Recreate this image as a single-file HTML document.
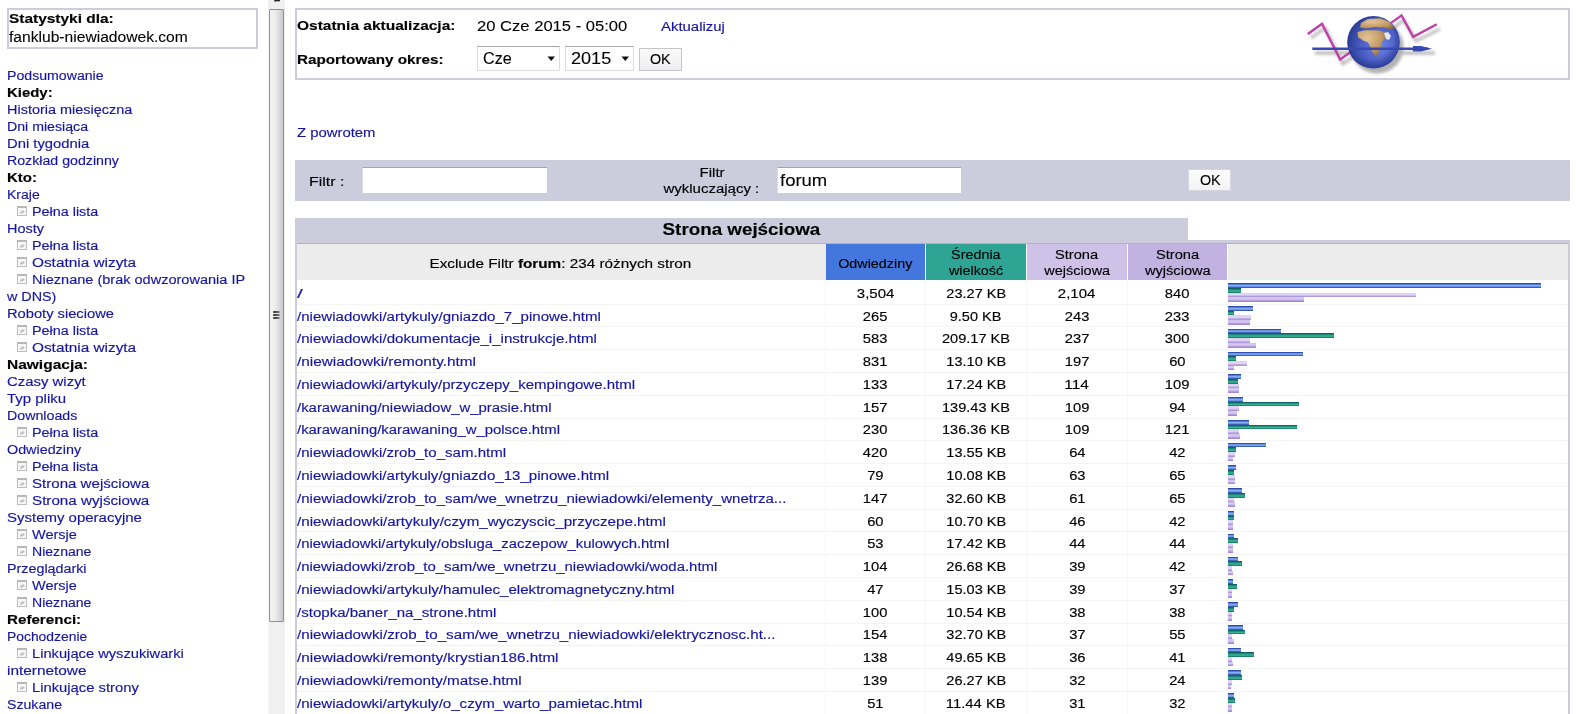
<!DOCTYPE html>
<html><head><meta charset="utf-8"><title>AWStats</title>
<style>
html,body{margin:0;padding:0;background:#fff;width:1576px;height:714px;overflow:hidden;position:relative;font-family:"Liberation Sans",sans-serif;}
.t{position:absolute;white-space:pre;font-family:"Liberation Sans",sans-serif;-webkit-text-stroke:0.15px currentColor;}
.t2{-webkit-text-stroke:0.1px currentColor;}
.bx{position:absolute;box-sizing:border-box;}
b{font-weight:bold;}
</style></head><body>

<div class="bx" style="left:7px;top:8px;width:251px;height:41px;border:2px solid #CCCCDD;background:#fff"></div>
<div class="bx" style="left:268px;top:0px;width:17px;height:714px;background:#F0F0F0;border-left:1px solid #F8F8F8"></div>
<div class="bx" style="left:269px;top:9px;width:15px;height:613px;border:1px solid #8F8F8F;border-radius:1px;background:linear-gradient(90deg,#F4F4F4 0%,#ECECEC 40%,#D6D6DA 80%,#C8C8CC 100%)"></div>
<div class="bx" style="left:273px;top:311px;width:7px;height:2px;background:linear-gradient(90deg,#333 0%,#555 60%,#999 100%);border-radius:1px"></div>
<div class="bx" style="left:273px;top:314px;width:7px;height:2px;background:linear-gradient(90deg,#333 0%,#555 60%,#999 100%);border-radius:1px"></div>
<div class="bx" style="left:273px;top:317px;width:7px;height:2px;background:linear-gradient(90deg,#333 0%,#555 60%,#999 100%);border-radius:1px"></div>
<svg style="position:absolute;left:268px;top:0" width="17" height="9"><rect x="0" y="0" width="17" height="9" fill="#F0F0F0"/><path d="M6.5 0 L12 0 L12 1.3 L6 1.5 Z" fill="#222"/></svg>
<div class="bx" style="left:295px;top:8px;width:1275px;height:72px;border:2px solid #CCCCDD;background:#fff"></div>
<div class="bx" style="left:477px;top:46px;width:83px;height:25px;border:1px solid #DCDCDC;border-top-color:#A9A9A9;background:#fff"></div>
<div class="bx" style="left:565px;top:46px;width:69px;height:25px;border:1px solid #DCDCDC;border-top-color:#A9A9A9;background:#fff"></div>
<svg style="position:absolute;left:547px;top:56px" width="9" height="6"><path d="M0.5 0.5 L8 0.5 L4.25 5 Z" fill="#111"/></svg>
<svg style="position:absolute;left:621px;top:56px" width="9" height="6"><path d="M0.5 0.5 L8 0.5 L4.25 5 Z" fill="#111"/></svg>
<div class="bx" style="left:639px;top:48px;width:43px;height:23px;border:1px solid #C6C6C6;background:linear-gradient(#FBFBFB,#EEEEEE)"></div>
<svg style="position:absolute;left:1296px;top:8px" width="152" height="72" viewBox="1296 8 152 72">
<defs>
<filter id="sh" x="-20%" y="-20%" width="140%" height="160%"><feGaussianBlur stdDeviation="1.6"/></filter>
<radialGradient id="gl" cx="0.62" cy="0.55" r="0.65"><stop offset="0" stop-color="#6c84e4"/><stop offset="0.55" stop-color="#4a5ec4"/><stop offset="1" stop-color="#263890"/></radialGradient>
<radialGradient id="edge" cx="0.45" cy="0.4" r="0.6"><stop offset="0.7" stop-color="#1c2c80" stop-opacity="0"/><stop offset="1" stop-color="#1c2c80" stop-opacity="0.55"/></radialGradient>
<radialGradient id="la" cx="0.35" cy="0.3" r="0.8"><stop offset="0" stop-color="#e2c498"/><stop offset="0.6" stop-color="#c49a64"/><stop offset="1" stop-color="#8a6a48"/></radialGradient>
</defs>
<g filter="url(#sh)" opacity="0.45">
<polyline points="1311,38 1325,28 1343,64 1404,20 1416,41 1440,29" fill="none" stroke="#666" stroke-width="3"/>
<circle cx="1377" cy="47" r="26.5" fill="#555"/>
<line x1="1315" y1="53" x2="1435" y2="53" stroke="#555" stroke-width="3"/>
</g>
<polyline points="1307.8,34 1322,23.7 1340.2,59.5 1401.5,15.4 1413.2,36.9 1436.8,24.2" fill="none" stroke="#C040A8" stroke-width="2.4" stroke-linejoin="miter"/>
<circle cx="1373.5" cy="42.3" r="26.3" fill="url(#gl)"/>
<clipPath id="gc"><circle cx="1373.5" cy="42.3" r="26.3"/></clipPath>
<g clip-path="url(#gc)">
<path d="M1361,23 L1368,19 L1380,18.3 L1390,22 L1396,28 L1390,29.5 L1384,27.5 L1375,27 L1366,28.5 L1360,27.5 Z" fill="url(#la)"/>
<path d="M1357.5,32 L1365,30.3 L1376,30.3 L1382,31 L1386,33.5 L1385,38 L1382,42 L1381,46 L1379,52 L1376,56.5 L1373,53 L1370,46 L1368,42.5 L1363,40.5 L1358,37 Z" fill="url(#la)"/>
<path d="M1384,33 L1388,32 L1391,36 L1389,40 L1386,39 Z" fill="#e4e6f0"/>
<circle cx="1373.5" cy="42.3" r="26.3" fill="url(#edge)"/>
</g>
<line x1="1312.3" y1="48.7" x2="1428" y2="48.7" stroke="#3848B0" stroke-width="2.6"/>
<path d="M1413,46 L1421,46 L1432,48.7 L1421,51.4 L1413,51.4 Z" fill="#3848B0"/>
</svg>
<div class="bx" style="left:295px;top:160px;width:1275px;height:41px;background:#CCCCDD"></div>
<div class="bx" style="left:362px;top:167px;width:185px;height:26px;background:#fff;border-top:1px solid #A4A4AC;border-left:1px solid #DADAE2"></div>
<div class="bx" style="left:777px;top:167px;width:184px;height:26px;background:#fff;border-top:1px solid #A4A4AC;border-left:1px solid #DADAE2"></div>
<div class="bx" style="left:1188px;top:169px;width:43px;height:22px;border:1px solid #D6D6DE;background:linear-gradient(#FDFDFD,#F3F3F3)"></div>
<div class="bx" style="left:295px;top:218px;width:893px;height:24px;background:#CCCCDD"></div>
<div class="bx" style="left:295px;top:240px;width:1275px;height:3px;background:#CCCCDD"></div>
<div class="bx" style="left:295px;top:243px;width:1275px;height:1px;background:#B0B0B8"></div>
<div class="bx" style="left:295px;top:242px;width:2px;height:472px;background:#CCCCDD"></div>
<div class="bx" style="left:1568px;top:242px;width:2px;height:472px;background:#CCCCDD"></div>
<div class="bx" style="left:297px;top:244px;width:529px;height:36px;background:#ECECEC"></div>
<div class="bx" style="left:826px;top:244px;width:99px;height:36px;background:#4477DD"></div>
<div class="bx" style="left:926px;top:244px;width:100px;height:36px;background:#2EA495"></div>
<div class="bx" style="left:1027px;top:244px;width:100px;height:36px;background:#CEC2E8"></div>
<div class="bx" style="left:1128px;top:244px;width:99px;height:36px;background:#C1B2E2"></div>
<div class="bx" style="left:1228px;top:244px;width:340px;height:36px;background:#ECECEC"></div>
<div class="bx" style="left:825px;top:280px;width:1px;height:434px;background:#F6F6F6"></div>
<div class="bx" style="left:925px;top:280px;width:1px;height:434px;background:#F6F6F6"></div>
<div class="bx" style="left:1026px;top:280px;width:1px;height:434px;background:#F6F6F6"></div>
<div class="bx" style="left:1127px;top:280px;width:1px;height:434px;background:#F6F6F6"></div>
<div class="bx" style="left:1227px;top:280px;width:1px;height:434px;background:#F6F6F6"></div>
<div class="bx" style="left:297px;top:304px;width:1271px;height:1px;background:#F4F4F4"></div>
<div class="bx" style="left:297px;top:326px;width:1271px;height:1px;background:#F4F4F4"></div>
<div class="bx" style="left:297px;top:349px;width:1271px;height:1px;background:#F4F4F4"></div>
<div class="bx" style="left:297px;top:372px;width:1271px;height:1px;background:#F4F4F4"></div>
<div class="bx" style="left:297px;top:395px;width:1271px;height:1px;background:#F4F4F4"></div>
<div class="bx" style="left:297px;top:418px;width:1271px;height:1px;background:#F4F4F4"></div>
<div class="bx" style="left:297px;top:440px;width:1271px;height:1px;background:#F4F4F4"></div>
<div class="bx" style="left:297px;top:463px;width:1271px;height:1px;background:#F4F4F4"></div>
<div class="bx" style="left:297px;top:486px;width:1271px;height:1px;background:#F4F4F4"></div>
<div class="bx" style="left:297px;top:509px;width:1271px;height:1px;background:#F4F4F4"></div>
<div class="bx" style="left:297px;top:531px;width:1271px;height:1px;background:#F4F4F4"></div>
<div class="bx" style="left:297px;top:554px;width:1271px;height:1px;background:#F4F4F4"></div>
<div class="bx" style="left:297px;top:577px;width:1271px;height:1px;background:#F4F4F4"></div>
<div class="bx" style="left:297px;top:600px;width:1271px;height:1px;background:#F4F4F4"></div>
<div class="bx" style="left:297px;top:623px;width:1271px;height:1px;background:#F4F4F4"></div>
<div class="bx" style="left:297px;top:645px;width:1271px;height:1px;background:#F4F4F4"></div>
<div class="bx" style="left:297px;top:668px;width:1271px;height:1px;background:#F4F4F4"></div>
<div class="bx" style="left:297px;top:691px;width:1271px;height:1px;background:#F4F4F4"></div>
<div class="bx" style="left:297px;top:714px;width:1271px;height:1px;background:#F4F4F4"></div>
<div class="bx" style="left:1228px;top:283px;width:313px;height:5px;background:linear-gradient(#1C3A8C 0%,#3a64c8 22%,#8CB0FA 45%,#6c94ec 70%,#23448F 100%)"></div>
<div class="bx" style="left:1228px;top:288px;width:13px;height:5px;background:linear-gradient(#0C4F5C 0%,#1c8478 30%,#3CB896 60%,#2a9a80 80%,#0E6A48 100%)"></div>
<div class="bx" style="left:1228px;top:293px;width:188px;height:4px;background:linear-gradient(#D8CCF2 0%,#E4DAFA 45%,#C2B0E6 70%,#A48CD0 100%)"></div>
<div class="bx" style="left:1228px;top:297px;width:76px;height:5px;background:linear-gradient(#CDBEEC 0%,#D8CAF4 40%,#B49EDC 70%,#9A80C8 100%)"></div>
<div class="bx" style="left:1228px;top:306px;width:25px;height:5px;background:linear-gradient(#1C3A8C 0%,#3a64c8 22%,#8CB0FA 45%,#6c94ec 70%,#23448F 100%)"></div>
<div class="bx" style="left:1228px;top:311px;width:6px;height:4px;background:linear-gradient(#0C4F5C 0%,#1c8478 30%,#3CB896 60%,#2a9a80 80%,#0E6A48 100%)"></div>
<div class="bx" style="left:1228px;top:315px;width:23px;height:5px;background:linear-gradient(#D8CCF2 0%,#E4DAFA 45%,#C2B0E6 70%,#A48CD0 100%)"></div>
<div class="bx" style="left:1228px;top:320px;width:22px;height:5px;background:linear-gradient(#CDBEEC 0%,#D8CAF4 40%,#B49EDC 70%,#9A80C8 100%)"></div>
<div class="bx" style="left:1228px;top:329px;width:53px;height:4px;background:linear-gradient(#1C3A8C 0%,#3a64c8 22%,#8CB0FA 45%,#6c94ec 70%,#23448F 100%)"></div>
<div class="bx" style="left:1228px;top:333px;width:106px;height:5px;background:linear-gradient(#0C4F5C 0%,#1c8478 30%,#3CB896 60%,#2a9a80 80%,#0E6A48 100%)"></div>
<div class="bx" style="left:1228px;top:338px;width:22px;height:5px;background:linear-gradient(#D8CCF2 0%,#E4DAFA 45%,#C2B0E6 70%,#A48CD0 100%)"></div>
<div class="bx" style="left:1228px;top:343px;width:28px;height:5px;background:linear-gradient(#CDBEEC 0%,#D8CAF4 40%,#B49EDC 70%,#9A80C8 100%)"></div>
<div class="bx" style="left:1228px;top:352px;width:75px;height:4px;background:linear-gradient(#1C3A8C 0%,#3a64c8 22%,#8CB0FA 45%,#6c94ec 70%,#23448F 100%)"></div>
<div class="bx" style="left:1228px;top:356px;width:8px;height:5px;background:linear-gradient(#0C4F5C 0%,#1c8478 30%,#3CB896 60%,#2a9a80 80%,#0E6A48 100%)"></div>
<div class="bx" style="left:1228px;top:361px;width:19px;height:5px;background:linear-gradient(#D8CCF2 0%,#E4DAFA 45%,#C2B0E6 70%,#A48CD0 100%)"></div>
<div class="bx" style="left:1228px;top:366px;width:6px;height:4px;background:linear-gradient(#CDBEEC 0%,#D8CAF4 40%,#B49EDC 70%,#9A80C8 100%)"></div>
<div class="bx" style="left:1228px;top:374px;width:13px;height:5px;background:linear-gradient(#1C3A8C 0%,#3a64c8 22%,#8CB0FA 45%,#6c94ec 70%,#23448F 100%)"></div>
<div class="bx" style="left:1228px;top:379px;width:10px;height:5px;background:linear-gradient(#0C4F5C 0%,#1c8478 30%,#3CB896 60%,#2a9a80 80%,#0E6A48 100%)"></div>
<div class="bx" style="left:1228px;top:384px;width:11px;height:4px;background:linear-gradient(#D8CCF2 0%,#E4DAFA 45%,#C2B0E6 70%,#A48CD0 100%)"></div>
<div class="bx" style="left:1228px;top:388px;width:11px;height:5px;background:linear-gradient(#CDBEEC 0%,#D8CAF4 40%,#B49EDC 70%,#9A80C8 100%)"></div>
<div class="bx" style="left:1228px;top:397px;width:15px;height:5px;background:linear-gradient(#1C3A8C 0%,#3a64c8 22%,#8CB0FA 45%,#6c94ec 70%,#23448F 100%)"></div>
<div class="bx" style="left:1228px;top:402px;width:71px;height:4px;background:linear-gradient(#0C4F5C 0%,#1c8478 30%,#3CB896 60%,#2a9a80 80%,#0E6A48 100%)"></div>
<div class="bx" style="left:1228px;top:406px;width:11px;height:5px;background:linear-gradient(#D8CCF2 0%,#E4DAFA 45%,#C2B0E6 70%,#A48CD0 100%)"></div>
<div class="bx" style="left:1228px;top:411px;width:9px;height:5px;background:linear-gradient(#CDBEEC 0%,#D8CAF4 40%,#B49EDC 70%,#9A80C8 100%)"></div>
<div class="bx" style="left:1228px;top:420px;width:21px;height:5px;background:linear-gradient(#1C3A8C 0%,#3a64c8 22%,#8CB0FA 45%,#6c94ec 70%,#23448F 100%)"></div>
<div class="bx" style="left:1228px;top:425px;width:69px;height:4px;background:linear-gradient(#0C4F5C 0%,#1c8478 30%,#3CB896 60%,#2a9a80 80%,#0E6A48 100%)"></div>
<div class="bx" style="left:1228px;top:429px;width:11px;height:5px;background:linear-gradient(#D8CCF2 0%,#E4DAFA 45%,#C2B0E6 70%,#A48CD0 100%)"></div>
<div class="bx" style="left:1228px;top:434px;width:12px;height:5px;background:linear-gradient(#CDBEEC 0%,#D8CAF4 40%,#B49EDC 70%,#9A80C8 100%)"></div>
<div class="bx" style="left:1228px;top:443px;width:38px;height:4px;background:linear-gradient(#1C3A8C 0%,#3a64c8 22%,#8CB0FA 45%,#6c94ec 70%,#23448F 100%)"></div>
<div class="bx" style="left:1228px;top:447px;width:8px;height:5px;background:linear-gradient(#0C4F5C 0%,#1c8478 30%,#3CB896 60%,#2a9a80 80%,#0E6A48 100%)"></div>
<div class="bx" style="left:1228px;top:452px;width:7px;height:5px;background:linear-gradient(#D8CCF2 0%,#E4DAFA 45%,#C2B0E6 70%,#A48CD0 100%)"></div>
<div class="bx" style="left:1228px;top:457px;width:5px;height:4px;background:linear-gradient(#CDBEEC 0%,#D8CAF4 40%,#B49EDC 70%,#9A80C8 100%)"></div>
<div class="bx" style="left:1228px;top:465px;width:8px;height:5px;background:linear-gradient(#1C3A8C 0%,#3a64c8 22%,#8CB0FA 45%,#6c94ec 70%,#23448F 100%)"></div>
<div class="bx" style="left:1228px;top:470px;width:6px;height:5px;background:linear-gradient(#0C4F5C 0%,#1c8478 30%,#3CB896 60%,#2a9a80 80%,#0E6A48 100%)"></div>
<div class="bx" style="left:1228px;top:475px;width:7px;height:5px;background:linear-gradient(#D8CCF2 0%,#E4DAFA 45%,#C2B0E6 70%,#A48CD0 100%)"></div>
<div class="bx" style="left:1228px;top:480px;width:7px;height:4px;background:linear-gradient(#CDBEEC 0%,#D8CAF4 40%,#B49EDC 70%,#9A80C8 100%)"></div>
<div class="bx" style="left:1228px;top:488px;width:14px;height:5px;background:linear-gradient(#1C3A8C 0%,#3a64c8 22%,#8CB0FA 45%,#6c94ec 70%,#23448F 100%)"></div>
<div class="bx" style="left:1228px;top:493px;width:17px;height:5px;background:linear-gradient(#0C4F5C 0%,#1c8478 30%,#3CB896 60%,#2a9a80 80%,#0E6A48 100%)"></div>
<div class="bx" style="left:1228px;top:498px;width:6px;height:4px;background:linear-gradient(#D8CCF2 0%,#E4DAFA 45%,#C2B0E6 70%,#A48CD0 100%)"></div>
<div class="bx" style="left:1228px;top:502px;width:7px;height:5px;background:linear-gradient(#CDBEEC 0%,#D8CAF4 40%,#B49EDC 70%,#9A80C8 100%)"></div>
<div class="bx" style="left:1228px;top:511px;width:6px;height:5px;background:linear-gradient(#1C3A8C 0%,#3a64c8 22%,#8CB0FA 45%,#6c94ec 70%,#23448F 100%)"></div>
<div class="bx" style="left:1228px;top:516px;width:6px;height:4px;background:linear-gradient(#0C4F5C 0%,#1c8478 30%,#3CB896 60%,#2a9a80 80%,#0E6A48 100%)"></div>
<div class="bx" style="left:1228px;top:520px;width:5px;height:5px;background:linear-gradient(#D8CCF2 0%,#E4DAFA 45%,#C2B0E6 70%,#A48CD0 100%)"></div>
<div class="bx" style="left:1228px;top:525px;width:5px;height:5px;background:linear-gradient(#CDBEEC 0%,#D8CAF4 40%,#B49EDC 70%,#9A80C8 100%)"></div>
<div class="bx" style="left:1228px;top:534px;width:6px;height:4px;background:linear-gradient(#1C3A8C 0%,#3a64c8 22%,#8CB0FA 45%,#6c94ec 70%,#23448F 100%)"></div>
<div class="bx" style="left:1228px;top:538px;width:10px;height:5px;background:linear-gradient(#0C4F5C 0%,#1c8478 30%,#3CB896 60%,#2a9a80 80%,#0E6A48 100%)"></div>
<div class="bx" style="left:1228px;top:543px;width:5px;height:5px;background:linear-gradient(#D8CCF2 0%,#E4DAFA 45%,#C2B0E6 70%,#A48CD0 100%)"></div>
<div class="bx" style="left:1228px;top:548px;width:5px;height:5px;background:linear-gradient(#CDBEEC 0%,#D8CAF4 40%,#B49EDC 70%,#9A80C8 100%)"></div>
<div class="bx" style="left:1228px;top:557px;width:10px;height:4px;background:linear-gradient(#1C3A8C 0%,#3a64c8 22%,#8CB0FA 45%,#6c94ec 70%,#23448F 100%)"></div>
<div class="bx" style="left:1228px;top:561px;width:14px;height:5px;background:linear-gradient(#0C4F5C 0%,#1c8478 30%,#3CB896 60%,#2a9a80 80%,#0E6A48 100%)"></div>
<div class="bx" style="left:1228px;top:566px;width:4px;height:5px;background:linear-gradient(#D8CCF2 0%,#E4DAFA 45%,#C2B0E6 70%,#A48CD0 100%)"></div>
<div class="bx" style="left:1228px;top:571px;width:5px;height:4px;background:linear-gradient(#CDBEEC 0%,#D8CAF4 40%,#B49EDC 70%,#9A80C8 100%)"></div>
<div class="bx" style="left:1228px;top:579px;width:5px;height:5px;background:linear-gradient(#1C3A8C 0%,#3a64c8 22%,#8CB0FA 45%,#6c94ec 70%,#23448F 100%)"></div>
<div class="bx" style="left:1228px;top:584px;width:9px;height:5px;background:linear-gradient(#0C4F5C 0%,#1c8478 30%,#3CB896 60%,#2a9a80 80%,#0E6A48 100%)"></div>
<div class="bx" style="left:1228px;top:589px;width:4px;height:4px;background:linear-gradient(#D8CCF2 0%,#E4DAFA 45%,#C2B0E6 70%,#A48CD0 100%)"></div>
<div class="bx" style="left:1228px;top:593px;width:4px;height:5px;background:linear-gradient(#CDBEEC 0%,#D8CAF4 40%,#B49EDC 70%,#9A80C8 100%)"></div>
<div class="bx" style="left:1228px;top:602px;width:10px;height:5px;background:linear-gradient(#1C3A8C 0%,#3a64c8 22%,#8CB0FA 45%,#6c94ec 70%,#23448F 100%)"></div>
<div class="bx" style="left:1228px;top:607px;width:6px;height:5px;background:linear-gradient(#0C4F5C 0%,#1c8478 30%,#3CB896 60%,#2a9a80 80%,#0E6A48 100%)"></div>
<div class="bx" style="left:1228px;top:612px;width:4px;height:4px;background:linear-gradient(#D8CCF2 0%,#E4DAFA 45%,#C2B0E6 70%,#A48CD0 100%)"></div>
<div class="bx" style="left:1228px;top:616px;width:4px;height:5px;background:linear-gradient(#CDBEEC 0%,#D8CAF4 40%,#B49EDC 70%,#9A80C8 100%)"></div>
<div class="bx" style="left:1228px;top:625px;width:15px;height:5px;background:linear-gradient(#1C3A8C 0%,#3a64c8 22%,#8CB0FA 45%,#6c94ec 70%,#23448F 100%)"></div>
<div class="bx" style="left:1228px;top:630px;width:17px;height:4px;background:linear-gradient(#0C4F5C 0%,#1c8478 30%,#3CB896 60%,#2a9a80 80%,#0E6A48 100%)"></div>
<div class="bx" style="left:1228px;top:634px;width:4px;height:5px;background:linear-gradient(#D8CCF2 0%,#E4DAFA 45%,#C2B0E6 70%,#A48CD0 100%)"></div>
<div class="bx" style="left:1228px;top:639px;width:6px;height:5px;background:linear-gradient(#CDBEEC 0%,#D8CAF4 40%,#B49EDC 70%,#9A80C8 100%)"></div>
<div class="bx" style="left:1228px;top:648px;width:13px;height:4px;background:linear-gradient(#1C3A8C 0%,#3a64c8 22%,#8CB0FA 45%,#6c94ec 70%,#23448F 100%)"></div>
<div class="bx" style="left:1228px;top:652px;width:26px;height:5px;background:linear-gradient(#0C4F5C 0%,#1c8478 30%,#3CB896 60%,#2a9a80 80%,#0E6A48 100%)"></div>
<div class="bx" style="left:1228px;top:657px;width:4px;height:5px;background:linear-gradient(#D8CCF2 0%,#E4DAFA 45%,#C2B0E6 70%,#A48CD0 100%)"></div>
<div class="bx" style="left:1228px;top:662px;width:5px;height:4px;background:linear-gradient(#CDBEEC 0%,#D8CAF4 40%,#B49EDC 70%,#9A80C8 100%)"></div>
<div class="bx" style="left:1228px;top:670px;width:13px;height:5px;background:linear-gradient(#1C3A8C 0%,#3a64c8 22%,#8CB0FA 45%,#6c94ec 70%,#23448F 100%)"></div>
<div class="bx" style="left:1228px;top:675px;width:14px;height:5px;background:linear-gradient(#0C4F5C 0%,#1c8478 30%,#3CB896 60%,#2a9a80 80%,#0E6A48 100%)"></div>
<div class="bx" style="left:1228px;top:680px;width:4px;height:5px;background:linear-gradient(#D8CCF2 0%,#E4DAFA 45%,#C2B0E6 70%,#A48CD0 100%)"></div>
<div class="bx" style="left:1228px;top:685px;width:3px;height:4px;background:linear-gradient(#CDBEEC 0%,#D8CAF4 40%,#B49EDC 70%,#9A80C8 100%)"></div>
<div class="bx" style="left:1228px;top:693px;width:6px;height:5px;background:linear-gradient(#1C3A8C 0%,#3a64c8 22%,#8CB0FA 45%,#6c94ec 70%,#23448F 100%)"></div>
<div class="bx" style="left:1228px;top:698px;width:7px;height:5px;background:linear-gradient(#0C4F5C 0%,#1c8478 30%,#3CB896 60%,#2a9a80 80%,#0E6A48 100%)"></div>
<div class="bx" style="left:1228px;top:703px;width:4px;height:4px;background:linear-gradient(#D8CCF2 0%,#E4DAFA 45%,#C2B0E6 70%,#A48CD0 100%)"></div>
<div class="bx" style="left:1228px;top:707px;width:4px;height:5px;background:linear-gradient(#CDBEEC 0%,#D8CAF4 40%,#B49EDC 70%,#9A80C8 100%)"></div>
<svg style="position:absolute;left:17px;top:206px" width="10" height="10"><rect x="0.5" y="0.5" width="9" height="9" fill="#F8F8F8" stroke="#BDBDBD"/><rect x="0" y="0" width="10" height="2" fill="#B4B9B4"/><ellipse cx="5.2" cy="6" rx="2.6" ry="1.5" transform="rotate(-25 5.2 6)" fill="#C4C4C4"/></svg>
<svg style="position:absolute;left:17px;top:240px" width="10" height="10"><rect x="0.5" y="0.5" width="9" height="9" fill="#F8F8F8" stroke="#BDBDBD"/><rect x="0" y="0" width="10" height="2" fill="#B4B9B4"/><ellipse cx="5.2" cy="6" rx="2.6" ry="1.5" transform="rotate(-25 5.2 6)" fill="#C4C4C4"/></svg>
<svg style="position:absolute;left:17px;top:257px" width="10" height="10"><rect x="0.5" y="0.5" width="9" height="9" fill="#F8F8F8" stroke="#BDBDBD"/><rect x="0" y="0" width="10" height="2" fill="#B4B9B4"/><ellipse cx="5.2" cy="6" rx="2.6" ry="1.5" transform="rotate(-25 5.2 6)" fill="#C4C4C4"/></svg>
<svg style="position:absolute;left:17px;top:274px" width="10" height="10"><rect x="0.5" y="0.5" width="9" height="9" fill="#F8F8F8" stroke="#BDBDBD"/><rect x="0" y="0" width="10" height="2" fill="#B4B9B4"/><ellipse cx="5.2" cy="6" rx="2.6" ry="1.5" transform="rotate(-25 5.2 6)" fill="#C4C4C4"/></svg>
<svg style="position:absolute;left:17px;top:325px" width="10" height="10"><rect x="0.5" y="0.5" width="9" height="9" fill="#F8F8F8" stroke="#BDBDBD"/><rect x="0" y="0" width="10" height="2" fill="#B4B9B4"/><ellipse cx="5.2" cy="6" rx="2.6" ry="1.5" transform="rotate(-25 5.2 6)" fill="#C4C4C4"/></svg>
<svg style="position:absolute;left:17px;top:342px" width="10" height="10"><rect x="0.5" y="0.5" width="9" height="9" fill="#F8F8F8" stroke="#BDBDBD"/><rect x="0" y="0" width="10" height="2" fill="#B4B9B4"/><ellipse cx="5.2" cy="6" rx="2.6" ry="1.5" transform="rotate(-25 5.2 6)" fill="#C4C4C4"/></svg>
<svg style="position:absolute;left:17px;top:427px" width="10" height="10"><rect x="0.5" y="0.5" width="9" height="9" fill="#F8F8F8" stroke="#BDBDBD"/><rect x="0" y="0" width="10" height="2" fill="#B4B9B4"/><ellipse cx="5.2" cy="6" rx="2.6" ry="1.5" transform="rotate(-25 5.2 6)" fill="#C4C4C4"/></svg>
<svg style="position:absolute;left:17px;top:461px" width="10" height="10"><rect x="0.5" y="0.5" width="9" height="9" fill="#F8F8F8" stroke="#BDBDBD"/><rect x="0" y="0" width="10" height="2" fill="#B4B9B4"/><ellipse cx="5.2" cy="6" rx="2.6" ry="1.5" transform="rotate(-25 5.2 6)" fill="#C4C4C4"/></svg>
<svg style="position:absolute;left:17px;top:478px" width="10" height="10"><rect x="0.5" y="0.5" width="9" height="9" fill="#F8F8F8" stroke="#BDBDBD"/><rect x="0" y="0" width="10" height="2" fill="#B4B9B4"/><ellipse cx="5.2" cy="6" rx="2.6" ry="1.5" transform="rotate(-25 5.2 6)" fill="#C4C4C4"/></svg>
<svg style="position:absolute;left:17px;top:495px" width="10" height="10"><rect x="0.5" y="0.5" width="9" height="9" fill="#F8F8F8" stroke="#BDBDBD"/><rect x="0" y="0" width="10" height="2" fill="#B4B9B4"/><ellipse cx="5.2" cy="6" rx="2.6" ry="1.5" transform="rotate(-25 5.2 6)" fill="#C4C4C4"/></svg>
<svg style="position:absolute;left:17px;top:529px" width="10" height="10"><rect x="0.5" y="0.5" width="9" height="9" fill="#F8F8F8" stroke="#BDBDBD"/><rect x="0" y="0" width="10" height="2" fill="#B4B9B4"/><ellipse cx="5.2" cy="6" rx="2.6" ry="1.5" transform="rotate(-25 5.2 6)" fill="#C4C4C4"/></svg>
<svg style="position:absolute;left:17px;top:546px" width="10" height="10"><rect x="0.5" y="0.5" width="9" height="9" fill="#F8F8F8" stroke="#BDBDBD"/><rect x="0" y="0" width="10" height="2" fill="#B4B9B4"/><ellipse cx="5.2" cy="6" rx="2.6" ry="1.5" transform="rotate(-25 5.2 6)" fill="#C4C4C4"/></svg>
<svg style="position:absolute;left:17px;top:580px" width="10" height="10"><rect x="0.5" y="0.5" width="9" height="9" fill="#F8F8F8" stroke="#BDBDBD"/><rect x="0" y="0" width="10" height="2" fill="#B4B9B4"/><ellipse cx="5.2" cy="6" rx="2.6" ry="1.5" transform="rotate(-25 5.2 6)" fill="#C4C4C4"/></svg>
<svg style="position:absolute;left:17px;top:597px" width="10" height="10"><rect x="0.5" y="0.5" width="9" height="9" fill="#F8F8F8" stroke="#BDBDBD"/><rect x="0" y="0" width="10" height="2" fill="#B4B9B4"/><ellipse cx="5.2" cy="6" rx="2.6" ry="1.5" transform="rotate(-25 5.2 6)" fill="#C4C4C4"/></svg>
<svg style="position:absolute;left:17px;top:648px" width="10" height="10"><rect x="0.5" y="0.5" width="9" height="9" fill="#F8F8F8" stroke="#BDBDBD"/><rect x="0" y="0" width="10" height="2" fill="#B4B9B4"/><ellipse cx="5.2" cy="6" rx="2.6" ry="1.5" transform="rotate(-25 5.2 6)" fill="#C4C4C4"/></svg>
<svg style="position:absolute;left:17px;top:682px" width="10" height="10"><rect x="0.5" y="0.5" width="9" height="9" fill="#F8F8F8" stroke="#BDBDBD"/><rect x="0" y="0" width="10" height="2" fill="#B4B9B4"/><ellipse cx="5.2" cy="6" rx="2.6" ry="1.5" transform="rotate(-25 5.2 6)" fill="#C4C4C4"/></svg>
<div class="t" style="left:9.00px;top:12.28px;font-size:13.26px;line-height:13.26px;color:#000000;font-weight:bold;transform:scaleX(1.1656);transform-origin:0 0">Statystyki dla:</div>
<div class="t t2" style="left:9.00px;top:29.51px;font-size:14.28px;line-height:14.28px;color:#000000;transform:scaleX(1.0945);transform-origin:0 0">fanklub-niewiadowek.com</div>
<div class="t" style="left:6.80px;top:68.78px;font-size:13.26px;line-height:13.26px;color:#1515A2;transform:scaleX(1.0662);transform-origin:0 0">Podsumowanie</div>
<div class="t" style="left:6.80px;top:85.78px;font-size:13.26px;line-height:13.26px;color:#000000;font-weight:bold;transform:scaleX(1.1272);transform-origin:0 0">Kiedy:</div>
<div class="t" style="left:6.80px;top:102.78px;font-size:13.26px;line-height:13.26px;color:#1515A2;transform:scaleX(1.0910);transform-origin:0 0">Historia miesięczna</div>
<div class="t" style="left:6.80px;top:119.78px;font-size:13.26px;line-height:13.26px;color:#1515A2;transform:scaleX(1.0683);transform-origin:0 0">Dni miesiąca</div>
<div class="t" style="left:6.80px;top:136.78px;font-size:13.26px;line-height:13.26px;color:#1515A2;transform:scaleX(1.1166);transform-origin:0 0">Dni tygodnia</div>
<div class="t" style="left:6.80px;top:153.78px;font-size:13.26px;line-height:13.26px;color:#1515A2;transform:scaleX(1.0700);transform-origin:0 0">Rozkład godzinny</div>
<div class="t" style="left:6.80px;top:170.78px;font-size:13.26px;line-height:13.26px;color:#000000;font-weight:bold;transform:scaleX(1.1323);transform-origin:0 0">Kto:</div>
<div class="t" style="left:6.80px;top:187.78px;font-size:13.26px;line-height:13.26px;color:#1515A2;transform:scaleX(1.0563);transform-origin:0 0">Kraje</div>
<div class="t" style="left:32.00px;top:204.78px;font-size:13.26px;line-height:13.26px;color:#1515A2;transform:scaleX(1.0832);transform-origin:0 0">Pełna lista</div>
<div class="t" style="left:6.80px;top:221.78px;font-size:13.26px;line-height:13.26px;color:#1515A2;transform:scaleX(1.0910);transform-origin:0 0">Hosty</div>
<div class="t" style="left:32.00px;top:238.78px;font-size:13.26px;line-height:13.26px;color:#1515A2;transform:scaleX(1.0832);transform-origin:0 0">Pełna lista</div>
<div class="t" style="left:32.00px;top:255.78px;font-size:13.26px;line-height:13.26px;color:#1515A2;transform:scaleX(1.1589);transform-origin:0 0">Ostatnia wizyta</div>
<div class="t" style="left:32.00px;top:272.78px;font-size:13.26px;line-height:13.26px;color:#1515A2;transform:scaleX(1.0963);transform-origin:0 0">Nieznane (brak odwzorowania IP</div>
<div class="t" style="left:6.80px;top:289.78px;font-size:13.26px;line-height:13.26px;color:#1515A2;transform:scaleX(1.0817);transform-origin:0 0">w DNS)</div>
<div class="t" style="left:6.80px;top:306.78px;font-size:13.26px;line-height:13.26px;color:#1515A2;transform:scaleX(1.1080);transform-origin:0 0">Roboty sieciowe</div>
<div class="t" style="left:32.00px;top:323.78px;font-size:13.26px;line-height:13.26px;color:#1515A2;transform:scaleX(1.0832);transform-origin:0 0">Pełna lista</div>
<div class="t" style="left:32.00px;top:340.78px;font-size:13.26px;line-height:13.26px;color:#1515A2;transform:scaleX(1.1589);transform-origin:0 0">Ostatnia wizyta</div>
<div class="t" style="left:6.80px;top:357.78px;font-size:13.26px;line-height:13.26px;color:#000000;font-weight:bold;transform:scaleX(1.1697);transform-origin:0 0">Nawigacja:</div>
<div class="t" style="left:6.80px;top:374.78px;font-size:13.26px;line-height:13.26px;color:#1515A2;transform:scaleX(1.1257);transform-origin:0 0">Czasy wizyt</div>
<div class="t" style="left:6.80px;top:391.78px;font-size:13.26px;line-height:13.26px;color:#1515A2;transform:scaleX(1.1295);transform-origin:0 0">Typ pliku</div>
<div class="t" style="left:6.80px;top:408.78px;font-size:13.26px;line-height:13.26px;color:#1515A2;transform:scaleX(1.0733);transform-origin:0 0">Downloads</div>
<div class="t" style="left:32.00px;top:425.78px;font-size:13.26px;line-height:13.26px;color:#1515A2;transform:scaleX(1.0832);transform-origin:0 0">Pełna lista</div>
<div class="t" style="left:6.80px;top:442.78px;font-size:13.26px;line-height:13.26px;color:#1515A2;transform:scaleX(1.0819);transform-origin:0 0">Odwiedziny</div>
<div class="t" style="left:32.00px;top:459.78px;font-size:13.26px;line-height:13.26px;color:#1515A2;transform:scaleX(1.0832);transform-origin:0 0">Pełna lista</div>
<div class="t" style="left:32.00px;top:476.78px;font-size:13.26px;line-height:13.26px;color:#1515A2;transform:scaleX(1.1381);transform-origin:0 0">Strona wejściowa</div>
<div class="t" style="left:32.00px;top:493.78px;font-size:13.26px;line-height:13.26px;color:#1515A2;transform:scaleX(1.1460);transform-origin:0 0">Strona wyjściowa</div>
<div class="t" style="left:6.80px;top:510.78px;font-size:13.26px;line-height:13.26px;color:#1515A2;transform:scaleX(1.1308);transform-origin:0 0">Systemy operacyjne</div>
<div class="t" style="left:32.00px;top:527.78px;font-size:13.26px;line-height:13.26px;color:#1515A2;transform:scaleX(1.0927);transform-origin:0 0">Wersje</div>
<div class="t" style="left:32.00px;top:544.78px;font-size:13.26px;line-height:13.26px;color:#1515A2;transform:scaleX(1.0613);transform-origin:0 0">Nieznane</div>
<div class="t" style="left:6.80px;top:561.78px;font-size:13.26px;line-height:13.26px;color:#1515A2;transform:scaleX(1.0799);transform-origin:0 0">Przeglądarki</div>
<div class="t" style="left:32.00px;top:578.78px;font-size:13.26px;line-height:13.26px;color:#1515A2;transform:scaleX(1.0927);transform-origin:0 0">Wersje</div>
<div class="t" style="left:32.00px;top:595.78px;font-size:13.26px;line-height:13.26px;color:#1515A2;transform:scaleX(1.0613);transform-origin:0 0">Nieznane</div>
<div class="t" style="left:6.80px;top:612.78px;font-size:13.26px;line-height:13.26px;color:#000000;font-weight:bold;transform:scaleX(1.1441);transform-origin:0 0">Referenci:</div>
<div class="t" style="left:6.80px;top:629.78px;font-size:13.26px;line-height:13.26px;color:#1515A2;transform:scaleX(1.0468);transform-origin:0 0">Pochodzenie</div>
<div class="t" style="left:32.00px;top:646.78px;font-size:13.26px;line-height:13.26px;color:#1515A2;transform:scaleX(1.1085);transform-origin:0 0">Linkujące wyszukiwarki</div>
<div class="t" style="left:6.80px;top:663.78px;font-size:13.26px;line-height:13.26px;color:#1515A2;transform:scaleX(1.1607);transform-origin:0 0">internetowe</div>
<div class="t" style="left:32.00px;top:680.78px;font-size:13.26px;line-height:13.26px;color:#1515A2;transform:scaleX(1.1151);transform-origin:0 0">Linkujące strony</div>
<div class="t" style="left:6.80px;top:697.78px;font-size:13.26px;line-height:13.26px;color:#1515A2;transform:scaleX(1.0665);transform-origin:0 0">Szukane</div>
<div class="t" style="left:297.00px;top:19.28px;font-size:13.26px;line-height:13.26px;color:#000000;font-weight:bold;transform:scaleX(1.1694);transform-origin:0 0">Ostatnia aktualizacja:</div>
<div class="t t2" style="left:476.50px;top:19.01px;font-size:14.28px;line-height:14.28px;color:#000000;transform:scaleX(1.1627);transform-origin:0 0">20 Cze 2015 - 05:00</div>
<div class="t" style="left:660.50px;top:19.78px;font-size:13.26px;line-height:13.26px;color:#1515A2;transform:scaleX(1.1267);transform-origin:0 0">Aktualizuj</div>
<div class="t" style="left:297.00px;top:52.58px;font-size:13.26px;line-height:13.26px;color:#000000;font-weight:bold;transform:scaleX(1.1500);transform-origin:0 0">Raportowany okres:</div>
<div class="t t2" style="left:482.50px;top:49.89px;font-size:16.32px;line-height:16.32px;color:#000000;transform:scaleX(0.9905);transform-origin:0 0">Cze</div>
<div class="t t2" style="left:571.00px;top:49.89px;font-size:16.32px;line-height:16.32px;color:#000000;transform:scaleX(1.1074);transform-origin:0 0">2015</div>
<div class="t t2" style="left:649.89px;top:51.61px;font-size:14.28px;line-height:14.28px;color:#000000;transform:scaleX(1.0046);transform-origin:50% 0">OK</div>
<div class="t" style="left:297.00px;top:126.18px;font-size:13.26px;line-height:13.26px;color:#1515A2;transform:scaleX(1.1216);transform-origin:0 0">Z powrotem</div>
<div class="t" style="left:309.00px;top:175.08px;font-size:13.26px;line-height:13.26px;color:#000000;transform:scaleX(1.2051);transform-origin:0 0">Filtr :</div>
<div class="t" style="left:701.46px;top:165.78px;font-size:13.26px;line-height:13.26px;color:#000000;transform:scaleX(1.1359);transform-origin:50% 0">Filtr</div>
<div class="t" style="left:669.46px;top:182.48px;font-size:13.26px;line-height:13.26px;color:#000000;transform:scaleX(1.1302);transform-origin:50% 0">wykluczający :</div>
<div class="t t2" style="left:779.50px;top:171.99px;font-size:16.32px;line-height:16.32px;color:#000000;transform:scaleX(1.1336);transform-origin:0 0">forum</div>
<div class="t t2" style="left:1200.19px;top:172.91px;font-size:14.28px;line-height:14.28px;color:#000000;transform:scaleX(1.0046);transform-origin:50% 0">OK</div>
<div class="t" style="left:672.55px;top:221.39px;font-size:16.32px;line-height:16.32px;color:#000000;font-weight:bold;transform:scaleX(1.1522);transform-origin:50% 0">Strona wejściowa</div>
<div class="t" style="left:447.09px;top:256.58px;font-size:13.26px;line-height:13.26px;color:#000000;transform:scaleX(1.1547);transform-origin:50% 0">Exclude Filtr <b>forum</b>: 234 różnych stron</div>
<div class="t" style="left:841.25px;top:256.58px;font-size:13.26px;line-height:13.26px;color:#000000;transform:scaleX(1.0819);transform-origin:50% 0">Odwiedziny</div>
<div class="t" style="left:953.16px;top:247.58px;font-size:13.26px;line-height:13.26px;color:#000000;transform:scaleX(1.0840);transform-origin:50% 0">Średnia</div>
<div class="t" style="left:950.96px;top:264.28px;font-size:13.26px;line-height:13.26px;color:#000000;transform:scaleX(1.0827);transform-origin:50% 0">wielkość</div>
<div class="t" style="left:1057.48px;top:247.58px;font-size:13.26px;line-height:13.26px;color:#000000;transform:scaleX(1.1054);transform-origin:50% 0">Strona</div>
<div class="t" style="left:1046.80px;top:264.28px;font-size:13.26px;line-height:13.26px;color:#000000;transform:scaleX(1.0894);transform-origin:50% 0">wejściowa</div>
<div class="t" style="left:1157.98px;top:247.58px;font-size:13.26px;line-height:13.26px;color:#000000;transform:scaleX(1.1054);transform-origin:50% 0">Strona</div>
<div class="t" style="left:1147.68px;top:264.28px;font-size:13.26px;line-height:13.26px;color:#000000;transform:scaleX(1.1022);transform-origin:50% 0">wyjściowa</div>
<div class="t" style="left:297.00px;top:286.78px;font-size:13.26px;line-height:13.26px;color:#1515A2;transform:scaleX(1.5882);transform-origin:0 0">/</div>
<div class="t" style="left:858.91px;top:286.78px;font-size:13.26px;line-height:13.26px;color:#000000;transform:scaleX(1.1309);transform-origin:50% 0">3,504</div>
<div class="t" style="left:948.74px;top:286.78px;font-size:13.26px;line-height:13.26px;color:#000000;transform:scaleX(1.0977);transform-origin:50% 0">23.27 KB</div>
<div class="t" style="left:1060.41px;top:286.78px;font-size:13.26px;line-height:13.26px;color:#000000;transform:scaleX(1.1309);transform-origin:50% 0">2,104</div>
<div class="t" style="left:1166.45px;top:286.78px;font-size:13.26px;line-height:13.26px;color:#000000;transform:scaleX(1.1132);transform-origin:50% 0">840</div>
<div class="t" style="left:297.00px;top:309.56px;font-size:13.26px;line-height:13.26px;color:#1515A2;transform:scaleX(1.1368);transform-origin:0 0">/niewiadowki/artykuly/gniazdo_7_pinowe.html</div>
<div class="t" style="left:864.45px;top:309.56px;font-size:13.26px;line-height:13.26px;color:#000000;transform:scaleX(1.1132);transform-origin:50% 0">265</div>
<div class="t" style="left:952.42px;top:309.56px;font-size:13.26px;line-height:13.26px;color:#000000;transform:scaleX(1.0951);transform-origin:50% 0">9.50 KB</div>
<div class="t" style="left:1065.95px;top:309.56px;font-size:13.26px;line-height:13.26px;color:#000000;transform:scaleX(1.1132);transform-origin:50% 0">243</div>
<div class="t" style="left:1166.45px;top:309.56px;font-size:13.26px;line-height:13.26px;color:#000000;transform:scaleX(1.1132);transform-origin:50% 0">233</div>
<div class="t" style="left:297.00px;top:332.34px;font-size:13.26px;line-height:13.26px;color:#1515A2;transform:scaleX(1.1376);transform-origin:0 0">/niewiadowki/dokumentacje_i_instrukcje.html</div>
<div class="t" style="left:864.45px;top:332.34px;font-size:13.26px;line-height:13.26px;color:#000000;transform:scaleX(1.1132);transform-origin:50% 0">583</div>
<div class="t" style="left:945.05px;top:332.34px;font-size:13.26px;line-height:13.26px;color:#000000;transform:scaleX(1.0995);transform-origin:50% 0">209.17 KB</div>
<div class="t" style="left:1065.95px;top:332.34px;font-size:13.26px;line-height:13.26px;color:#000000;transform:scaleX(1.1132);transform-origin:50% 0">237</div>
<div class="t" style="left:1166.45px;top:332.34px;font-size:13.26px;line-height:13.26px;color:#000000;transform:scaleX(1.1132);transform-origin:50% 0">300</div>
<div class="t" style="left:297.00px;top:355.12px;font-size:13.26px;line-height:13.26px;color:#1515A2;transform:scaleX(1.1594);transform-origin:0 0">/niewiadowki/remonty.html</div>
<div class="t" style="left:864.45px;top:355.12px;font-size:13.26px;line-height:13.26px;color:#000000;transform:scaleX(1.1132);transform-origin:50% 0">831</div>
<div class="t" style="left:948.74px;top:355.12px;font-size:13.26px;line-height:13.26px;color:#000000;transform:scaleX(1.0977);transform-origin:50% 0">13.10 KB</div>
<div class="t" style="left:1065.95px;top:355.12px;font-size:13.26px;line-height:13.26px;color:#000000;transform:scaleX(1.1132);transform-origin:50% 0">197</div>
<div class="t" style="left:1170.12px;top:355.12px;font-size:13.26px;line-height:13.26px;color:#000000;transform:scaleX(1.1125);transform-origin:50% 0">60</div>
<div class="t" style="left:297.00px;top:377.90px;font-size:13.26px;line-height:13.26px;color:#1515A2;transform:scaleX(1.1336);transform-origin:0 0">/niewiadowki/artykuly/przyczepy_kempingowe.html</div>
<div class="t" style="left:864.45px;top:377.90px;font-size:13.26px;line-height:13.26px;color:#000000;transform:scaleX(1.1132);transform-origin:50% 0">133</div>
<div class="t" style="left:948.74px;top:377.90px;font-size:13.26px;line-height:13.26px;color:#000000;transform:scaleX(1.0977);transform-origin:50% 0">17.24 KB</div>
<div class="t" style="left:1066.44px;top:377.90px;font-size:13.26px;line-height:13.26px;color:#000000;transform:scaleX(1.1651);transform-origin:50% 0">114</div>
<div class="t" style="left:1166.45px;top:377.90px;font-size:13.26px;line-height:13.26px;color:#000000;transform:scaleX(1.1132);transform-origin:50% 0">109</div>
<div class="t" style="left:297.00px;top:400.68px;font-size:13.26px;line-height:13.26px;color:#1515A2;transform:scaleX(1.1254);transform-origin:0 0">/karawaning/niewiadow_w_prasie.html</div>
<div class="t" style="left:864.45px;top:400.68px;font-size:13.26px;line-height:13.26px;color:#000000;transform:scaleX(1.1132);transform-origin:50% 0">157</div>
<div class="t" style="left:945.05px;top:400.68px;font-size:13.26px;line-height:13.26px;color:#000000;transform:scaleX(1.0995);transform-origin:50% 0">139.43 KB</div>
<div class="t" style="left:1065.95px;top:400.68px;font-size:13.26px;line-height:13.26px;color:#000000;transform:scaleX(1.1132);transform-origin:50% 0">109</div>
<div class="t" style="left:1170.12px;top:400.68px;font-size:13.26px;line-height:13.26px;color:#000000;transform:scaleX(1.1125);transform-origin:50% 0">94</div>
<div class="t" style="left:297.00px;top:423.46px;font-size:13.26px;line-height:13.26px;color:#1515A2;transform:scaleX(1.1227);transform-origin:0 0">/karawaning/karawaning_w_polsce.html</div>
<div class="t" style="left:864.45px;top:423.46px;font-size:13.26px;line-height:13.26px;color:#000000;transform:scaleX(1.1132);transform-origin:50% 0">230</div>
<div class="t" style="left:945.05px;top:423.46px;font-size:13.26px;line-height:13.26px;color:#000000;transform:scaleX(1.0995);transform-origin:50% 0">136.36 KB</div>
<div class="t" style="left:1065.95px;top:423.46px;font-size:13.26px;line-height:13.26px;color:#000000;transform:scaleX(1.1132);transform-origin:50% 0">109</div>
<div class="t" style="left:1166.45px;top:423.46px;font-size:13.26px;line-height:13.26px;color:#000000;transform:scaleX(1.1132);transform-origin:50% 0">121</div>
<div class="t" style="left:297.00px;top:446.24px;font-size:13.26px;line-height:13.26px;color:#1515A2;transform:scaleX(1.1355);transform-origin:0 0">/niewiadowki/zrob_to_sam.html</div>
<div class="t" style="left:864.45px;top:446.24px;font-size:13.26px;line-height:13.26px;color:#000000;transform:scaleX(1.1132);transform-origin:50% 0">420</div>
<div class="t" style="left:948.74px;top:446.24px;font-size:13.26px;line-height:13.26px;color:#000000;transform:scaleX(1.0977);transform-origin:50% 0">13.55 KB</div>
<div class="t" style="left:1069.62px;top:446.24px;font-size:13.26px;line-height:13.26px;color:#000000;transform:scaleX(1.1125);transform-origin:50% 0">64</div>
<div class="t" style="left:1170.12px;top:446.24px;font-size:13.26px;line-height:13.26px;color:#000000;transform:scaleX(1.1125);transform-origin:50% 0">42</div>
<div class="t" style="left:297.00px;top:469.02px;font-size:13.26px;line-height:13.26px;color:#1515A2;transform:scaleX(1.1361);transform-origin:0 0">/niewiadowki/artykuly/gniazdo_13_pinowe.html</div>
<div class="t" style="left:868.12px;top:469.02px;font-size:13.26px;line-height:13.26px;color:#000000;transform:scaleX(1.1125);transform-origin:50% 0">79</div>
<div class="t" style="left:948.74px;top:469.02px;font-size:13.26px;line-height:13.26px;color:#000000;transform:scaleX(1.0977);transform-origin:50% 0">10.08 KB</div>
<div class="t" style="left:1069.62px;top:469.02px;font-size:13.26px;line-height:13.26px;color:#000000;transform:scaleX(1.1125);transform-origin:50% 0">63</div>
<div class="t" style="left:1170.12px;top:469.02px;font-size:13.26px;line-height:13.26px;color:#000000;transform:scaleX(1.1125);transform-origin:50% 0">65</div>
<div class="t" style="left:297.00px;top:491.80px;font-size:13.26px;line-height:13.26px;color:#1515A2;transform:scaleX(1.1359);transform-origin:0 0">/niewiadowki/zrob_to_sam/we_wnetrzu_niewiadowki/elementy_wnetrza...</div>
<div class="t" style="left:864.45px;top:491.80px;font-size:13.26px;line-height:13.26px;color:#000000;transform:scaleX(1.1132);transform-origin:50% 0">147</div>
<div class="t" style="left:948.74px;top:491.80px;font-size:13.26px;line-height:13.26px;color:#000000;transform:scaleX(1.0977);transform-origin:50% 0">32.60 KB</div>
<div class="t" style="left:1069.62px;top:491.80px;font-size:13.26px;line-height:13.26px;color:#000000;transform:scaleX(1.1125);transform-origin:50% 0">61</div>
<div class="t" style="left:1170.12px;top:491.80px;font-size:13.26px;line-height:13.26px;color:#000000;transform:scaleX(1.1125);transform-origin:50% 0">65</div>
<div class="t" style="left:297.00px;top:514.58px;font-size:13.26px;line-height:13.26px;color:#1515A2;transform:scaleX(1.1461);transform-origin:0 0">/niewiadowki/artykuly/czym_wyczyscic_przyczepe.html</div>
<div class="t" style="left:868.12px;top:514.58px;font-size:13.26px;line-height:13.26px;color:#000000;transform:scaleX(1.1125);transform-origin:50% 0">60</div>
<div class="t" style="left:948.74px;top:514.58px;font-size:13.26px;line-height:13.26px;color:#000000;transform:scaleX(1.0977);transform-origin:50% 0">10.70 KB</div>
<div class="t" style="left:1069.62px;top:514.58px;font-size:13.26px;line-height:13.26px;color:#000000;transform:scaleX(1.1125);transform-origin:50% 0">46</div>
<div class="t" style="left:1170.12px;top:514.58px;font-size:13.26px;line-height:13.26px;color:#000000;transform:scaleX(1.1125);transform-origin:50% 0">42</div>
<div class="t" style="left:297.00px;top:537.36px;font-size:13.26px;line-height:13.26px;color:#1515A2;transform:scaleX(1.1231);transform-origin:0 0">/niewiadowki/artykuly/obsluga_zaczepow_kulowych.html</div>
<div class="t" style="left:868.12px;top:537.36px;font-size:13.26px;line-height:13.26px;color:#000000;transform:scaleX(1.1125);transform-origin:50% 0">53</div>
<div class="t" style="left:948.74px;top:537.36px;font-size:13.26px;line-height:13.26px;color:#000000;transform:scaleX(1.0977);transform-origin:50% 0">17.42 KB</div>
<div class="t" style="left:1069.62px;top:537.36px;font-size:13.26px;line-height:13.26px;color:#000000;transform:scaleX(1.1125);transform-origin:50% 0">44</div>
<div class="t" style="left:1170.12px;top:537.36px;font-size:13.26px;line-height:13.26px;color:#000000;transform:scaleX(1.1125);transform-origin:50% 0">44</div>
<div class="t" style="left:297.00px;top:560.14px;font-size:13.26px;line-height:13.26px;color:#1515A2;transform:scaleX(1.1280);transform-origin:0 0">/niewiadowki/zrob_to_sam/we_wnetrzu_niewiadowki/woda.html</div>
<div class="t" style="left:864.45px;top:560.14px;font-size:13.26px;line-height:13.26px;color:#000000;transform:scaleX(1.1132);transform-origin:50% 0">104</div>
<div class="t" style="left:948.74px;top:560.14px;font-size:13.26px;line-height:13.26px;color:#000000;transform:scaleX(1.0977);transform-origin:50% 0">26.68 KB</div>
<div class="t" style="left:1069.62px;top:560.14px;font-size:13.26px;line-height:13.26px;color:#000000;transform:scaleX(1.1125);transform-origin:50% 0">39</div>
<div class="t" style="left:1170.12px;top:560.14px;font-size:13.26px;line-height:13.26px;color:#000000;transform:scaleX(1.1125);transform-origin:50% 0">42</div>
<div class="t" style="left:297.00px;top:582.92px;font-size:13.26px;line-height:13.26px;color:#1515A2;transform:scaleX(1.1395);transform-origin:0 0">/niewiadowki/artykuly/hamulec_elektromagnetyczny.html</div>
<div class="t" style="left:868.12px;top:582.92px;font-size:13.26px;line-height:13.26px;color:#000000;transform:scaleX(1.1125);transform-origin:50% 0">47</div>
<div class="t" style="left:948.74px;top:582.92px;font-size:13.26px;line-height:13.26px;color:#000000;transform:scaleX(1.0977);transform-origin:50% 0">15.03 KB</div>
<div class="t" style="left:1069.62px;top:582.92px;font-size:13.26px;line-height:13.26px;color:#000000;transform:scaleX(1.1125);transform-origin:50% 0">39</div>
<div class="t" style="left:1170.12px;top:582.92px;font-size:13.26px;line-height:13.26px;color:#000000;transform:scaleX(1.1125);transform-origin:50% 0">37</div>
<div class="t" style="left:297.00px;top:605.70px;font-size:13.26px;line-height:13.26px;color:#1515A2;transform:scaleX(1.1367);transform-origin:0 0">/stopka/baner_na_strone.html</div>
<div class="t" style="left:864.45px;top:605.70px;font-size:13.26px;line-height:13.26px;color:#000000;transform:scaleX(1.1132);transform-origin:50% 0">100</div>
<div class="t" style="left:948.74px;top:605.70px;font-size:13.26px;line-height:13.26px;color:#000000;transform:scaleX(1.0977);transform-origin:50% 0">10.54 KB</div>
<div class="t" style="left:1069.62px;top:605.70px;font-size:13.26px;line-height:13.26px;color:#000000;transform:scaleX(1.1125);transform-origin:50% 0">38</div>
<div class="t" style="left:1170.12px;top:605.70px;font-size:13.26px;line-height:13.26px;color:#000000;transform:scaleX(1.1125);transform-origin:50% 0">38</div>
<div class="t" style="left:297.00px;top:628.48px;font-size:13.26px;line-height:13.26px;color:#1515A2;transform:scaleX(1.1439);transform-origin:0 0">/niewiadowki/zrob_to_sam/we_wnetrzu_niewiadowki/elektrycznosc.ht...</div>
<div class="t" style="left:864.45px;top:628.48px;font-size:13.26px;line-height:13.26px;color:#000000;transform:scaleX(1.1132);transform-origin:50% 0">154</div>
<div class="t" style="left:948.74px;top:628.48px;font-size:13.26px;line-height:13.26px;color:#000000;transform:scaleX(1.0977);transform-origin:50% 0">32.70 KB</div>
<div class="t" style="left:1069.62px;top:628.48px;font-size:13.26px;line-height:13.26px;color:#000000;transform:scaleX(1.1125);transform-origin:50% 0">37</div>
<div class="t" style="left:1170.12px;top:628.48px;font-size:13.26px;line-height:13.26px;color:#000000;transform:scaleX(1.1125);transform-origin:50% 0">55</div>
<div class="t" style="left:297.00px;top:651.26px;font-size:13.26px;line-height:13.26px;color:#1515A2;transform:scaleX(1.1530);transform-origin:0 0">/niewiadowki/remonty/krystian186.html</div>
<div class="t" style="left:864.45px;top:651.26px;font-size:13.26px;line-height:13.26px;color:#000000;transform:scaleX(1.1132);transform-origin:50% 0">138</div>
<div class="t" style="left:948.74px;top:651.26px;font-size:13.26px;line-height:13.26px;color:#000000;transform:scaleX(1.0977);transform-origin:50% 0">49.65 KB</div>
<div class="t" style="left:1069.62px;top:651.26px;font-size:13.26px;line-height:13.26px;color:#000000;transform:scaleX(1.1125);transform-origin:50% 0">36</div>
<div class="t" style="left:1170.12px;top:651.26px;font-size:13.26px;line-height:13.26px;color:#000000;transform:scaleX(1.1125);transform-origin:50% 0">41</div>
<div class="t" style="left:297.00px;top:674.04px;font-size:13.26px;line-height:13.26px;color:#1515A2;transform:scaleX(1.1514);transform-origin:0 0">/niewiadowki/remonty/matse.html</div>
<div class="t" style="left:864.45px;top:674.04px;font-size:13.26px;line-height:13.26px;color:#000000;transform:scaleX(1.1132);transform-origin:50% 0">139</div>
<div class="t" style="left:948.74px;top:674.04px;font-size:13.26px;line-height:13.26px;color:#000000;transform:scaleX(1.0977);transform-origin:50% 0">26.27 KB</div>
<div class="t" style="left:1069.62px;top:674.04px;font-size:13.26px;line-height:13.26px;color:#000000;transform:scaleX(1.1125);transform-origin:50% 0">32</div>
<div class="t" style="left:1170.12px;top:674.04px;font-size:13.26px;line-height:13.26px;color:#000000;transform:scaleX(1.1125);transform-origin:50% 0">24</div>
<div class="t" style="left:297.00px;top:696.82px;font-size:13.26px;line-height:13.26px;color:#1515A2;transform:scaleX(1.1382);transform-origin:0 0">/niewiadowki/artykuly/o_czym_warto_pamietac.html</div>
<div class="t" style="left:868.12px;top:696.82px;font-size:13.26px;line-height:13.26px;color:#000000;transform:scaleX(1.1125);transform-origin:50% 0">51</div>
<div class="t" style="left:949.23px;top:696.82px;font-size:13.26px;line-height:13.26px;color:#000000;transform:scaleX(1.1179);transform-origin:50% 0">11.44 KB</div>
<div class="t" style="left:1069.62px;top:696.82px;font-size:13.26px;line-height:13.26px;color:#000000;transform:scaleX(1.1125);transform-origin:50% 0">31</div>
<div class="t" style="left:1170.12px;top:696.82px;font-size:13.26px;line-height:13.26px;color:#000000;transform:scaleX(1.1125);transform-origin:50% 0">32</div>
</body></html>
